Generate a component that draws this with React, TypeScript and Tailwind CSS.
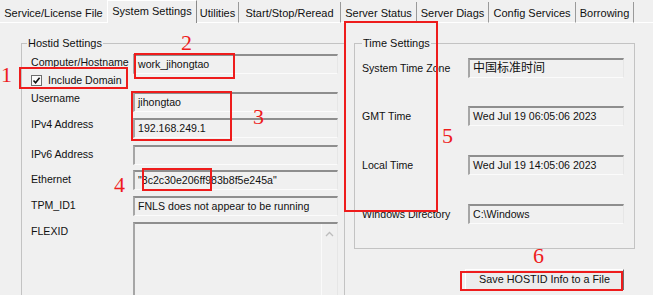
import React from "react";

const field =
  "h-[20px] w-full border-t-2 border-l-2 border-t-[#8e8e8e] border-l-[#a6a6a6] border-b border-r border-b-[#fbfbfb] border-r-[#e6e6e6] bg-[#f0f0f0] pl-[3px] flex items-center whitespace-nowrap overflow-hidden";

function Tab({ label, w, sel, noSep }: { label: string; w: number; sel?: boolean; noSep?: boolean }) {
  if (sel) {
    return (
      <div
        style={{ width: w }}
        className="h-[23px] shrink-0 border-t border-l border-white border-r border-r-[#8a8a8a] flex items-center justify-center pb-[1px]"
      >
        {label}
      </div>
    );
  }
  return (
    <div
      style={{ width: w }}
      className={
        "h-[21px] shrink-0 border-b border-b-white pt-[3px] flex items-center justify-center " +
        (noSep ? "" : "border-r border-r-[#9a9a9a]")
      }
    >
      {label}
    </div>
  );
}

function LRow({
  label,
  children,
  mt,
  pt,
}: {
  label: string;
  children: React.ReactNode;
  mt: string;
  pt: string;
}) {
  return (
    <div className={"flex items-start " + mt}>
      <div className={"w-[102px] shrink-0 whitespace-nowrap " + pt}>{label}</div>
      <div className="w-[205px] shrink-0">{children}</div>
    </div>
  );
}

function RRow({ label, children, mt }: { label: string; children: React.ReactNode; mt: string }) {
  return (
    <div className={"flex items-center h-[20px] " + mt}>
      <div className="w-[106px] shrink-0 whitespace-nowrap">{label}</div>
      <div className="w-[156px] shrink-0">{children}</div>
    </div>
  );
}

export default function App() {
  const red = "absolute border-2 border-[#ee1c1c]";
  const num =
    "absolute font-['Liberation_Serif',serif] text-[22px] leading-[22px] text-[#ee1c1c]";
  return (
    <div className="relative w-[653px] h-[295px] overflow-hidden bg-[#f0f0f0] text-[11px] leading-[13px] text-[#111] font-['Liberation_Sans','Noto_Sans_CJK_SC',sans-serif]">
      {/* tabs */}
      <div className="flex items-end h-[23px]">
        <Tab label="Service/License File" w={107} noSep />
        <Tab label="System Settings" w={90} sel />
        <Tab label="Utilities" w={42} />
        <Tab label="Start/Stop/Reread" w={102} />
        <Tab label="Server Status" w={76} />
        <Tab label="Server Diags" w={72} />
        <Tab label="Config Services" w={87} />
        <Tab label="Borrowing" w={58} />
        <div className="flex-1 h-[21px] border-b border-b-white" />
      </div>

      {/* page */}
      <div className="flex items-start pl-[21px] pt-[14px] gap-[9px] text-[10.6px]">
        {/* Hostid settings */}
        <fieldset className="w-[324px] h-[300px] shrink-0 border border-[#c3c3c3] pl-[9px] pt-[4px]">
          <legend className="ml-[-4px] px-[1px] leading-[13px] text-[11px]">Hostid Settings</legend>
          <LRow label="Computer/Hostname" mt="mt-0" pt="pt-[2px]">
            <div className={field}>work_jihongtao</div>
          </LRow>
          <div className="flex items-center h-[12px]">
            <div className="w-[11px] h-[11px] border border-[#6e6e6e] bg-[#fafafa] flex items-center justify-center">
              <svg width="9" height="9" viewBox="0 0 9 9">
                <path d="M1.5 4.5 L3.6 6.8 L7.6 1.8" fill="none" stroke="#111" strokeWidth="1.6" />
              </svg>
            </div>
            <span className="ml-[6px]">Include Domain</span>
          </div>
          <LRow label="Username" mt="mt-[6px]" pt="pt-0">
            <div className={field}>jihongtao</div>
          </LRow>
          <LRow label="IPv4 Address" mt="mt-[6px]" pt="pt-0">
            <div className={field}>192.168.249.1</div>
          </LRow>
          <LRow label="IPv6 Address" mt="mt-[7px]" pt="pt-[3px]">
            <div className={field}></div>
          </LRow>
          <LRow label="Ethernet" mt="mt-[5px]" pt="pt-[3px]">
            <div className={field}>"3c2c30e206ff983b8f5e245a"</div>
          </LRow>
          <LRow label="TPM_ID1" mt="mt-[6px]" pt="pt-[3px]">
            <div className={field}>FNLS does not appear to be running</div>
          </LRow>
          <LRow label="FLEXID" mt="mt-[6px]" pt="pt-[3px]">
            <div className="h-[90px] w-full border-t-2 border-l-2 border-t-[#8e8e8e] border-l-[#a6a6a6] border-r border-r-[#e6e6e6] bg-[#f0f0f0] flex justify-end">
              <div className="w-[16px] h-full border-l border-l-[#fafafa] flex justify-center pt-[7px]">
                <svg width="9" height="6" viewBox="0 0 9 6">
                  <path d="M1 5 L4.5 1.5 L8 5" fill="none" stroke="#bdbdbd" strokeWidth="1.3" />
                </svg>
              </div>
            </div>
          </LRow>
        </fieldset>

        {/* Time settings */}
        <div className="flex flex-col shrink-0">
          <fieldset className="w-[281px] border border-[#c3c3c3] pl-[7px] pt-[8px] pb-[24px]">
            <legend className="ml-0 px-[1px] leading-[13px] text-[11px]">Time Settings</legend>
            <RRow label="System Time Zone" mt="mt-0">
              <div className={field + " text-[12px]"}>中国标准时间</div>
            </RRow>
            <RRow label="GMT Time" mt="mt-[28px]">
              <div className={field}>Wed Jul 19 06:05:06 2023</div>
            </RRow>
            <RRow label="Local Time" mt="mt-[29px]">
              <div className={field}>Wed Jul 19 14:05:06 2023</div>
            </RRow>
            <RRow label="Windows Directory" mt="mt-[29px]">
              <div className={field}>C:\Windows</div>
            </RRow>
          </fieldset>
          <div className="flex justify-end pr-[11px] mt-[20px]">
            <button className="w-[159px] h-[21px] bg-[#ececec] border-t border-l border-t-white border-l-white border-r border-b border-r-[#6f6f6f] border-b-[#6f6f6f] flex items-center justify-center text-[10.8px]">
              Save HOSTID Info to a File
            </button>
          </div>
        </div>
      </div>

      {/* annotations */}
      <div className={red + " left-[19px] top-[67px] w-[109px] h-[22px]"} />
      <div className={red + " left-[134px] top-[53px] w-[101px] h-[26px]"} />
      <div className={red + " left-[131px] top-[91px] w-[101px] h-[50px]"} />
      <div className={red + " left-[142px] top-[168px] w-[70px] h-[23px]"} />
      <div className={red + " left-[344px] top-[21px] w-[94px] h-[191px]"} />
      <div className={red + " left-[460px] top-[271px] w-[163px] h-[20px]"} />
      <div className={num + " left-[1px] top-[64px]"}>1</div>
      <div className={num + " left-[181px] top-[32px]"}>2</div>
      <div className={num + " left-[253px] top-[106px]"}>3</div>
      <div className={num + " left-[114px] top-[174px]"}>4</div>
      <div className={num + " left-[442px] top-[125px]"}>5</div>
      <div className={num + " left-[533px] top-[245px]"}>6</div>
    </div>
  );
}
